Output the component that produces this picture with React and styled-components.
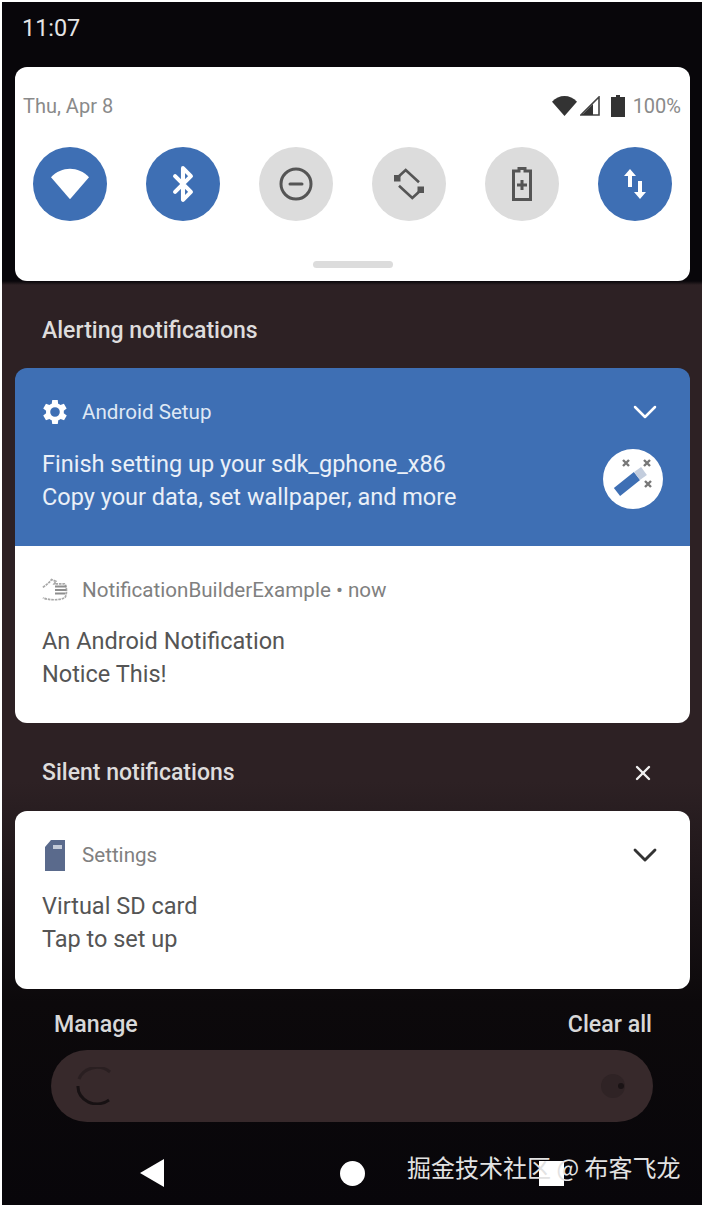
import styled, { createGlobalStyle } from 'styled-components';
import { Bluetooth, ChevronDown, MinusCircle, X } from 'lucide-react';

const GlobalStyle = createGlobalStyle`
  html, body {
    margin: 0;
    padding: 0;
    background: #fff;
  }

  body {
    font-family: Roboto, "Noto Sans", sans-serif;
  }
`;

const Screen = styled.div`
  position: relative;
  box-sizing: border-box;
  width: 700px;
  height: 1203px;
  margin: 2px;
  padding: 0 12px 0 13px;
  overflow: hidden;
  display: flex;
  flex-direction: column;
  background: linear-gradient(
    #08060a 0,
    #08060a 279px,
    #2d2124 283px,
    #2d2124 780px,
    #1a1316 900px,
    #0c090b 1000px,
    #08060a 100%
  );
`;

const StatusBar = styled.div`
  height: 65px;
  padding: 14px 0 0 7px;
  box-sizing: border-box;
  font-size: 23.4px;
  line-height: 25px;
  color: #e4e4e4;
`;

const QuickPanel = styled.div`
  height: 214px;
  box-sizing: border-box;
  padding: 27px 9px 0 8px;
  display: flex;
  flex-direction: column;
  border-radius: 12px;
  background: #fff;
`;

const QuickHeader = styled.div`
  display: flex;
  justify-content: space-between;
  align-items: center;
  height: 24px;
  font-size: 20px;
  color: #8a8a8a;
`;

const StatusIcons = styled.div`
  display: flex;
  align-items: center;
  gap: 3px;

  svg:nth-child(3) {
    margin: 0 2px 0 8px;
  }

  span {
    margin-left: 3px;
    color: #8a8a8a;
  }
`;

const Tiles = styled.div`
  display: flex;
  justify-content: space-between;
  margin: 29px 9px 0 10px;
`;

const Tile = styled.div`
  width: 74px;
  height: 74px;
  display: flex;
  justify-content: center;
  align-items: center;
  border-radius: 50%;
  color: ${(props) => (props.$on ? '#fff' : '#555')};
  background: ${(props) => (props.$on ? '#3e6fb4' : '#dcdcdc')};
`;

const Handle = styled.div`
  width: 80px;
  height: 7px;
  margin: 40px auto 0 290px;
  border-radius: 4px;
  background: #dcdcdc;
`;

const SectionHeader = styled.div`
  display: flex;
  justify-content: space-between;
  align-items: center;
  box-sizing: border-box;
  height: ${(props) => props.$height}px;
  padding: 11px 35px 0 27px;
  font-size: 23px;
  font-weight: 500;
  color: #dedcdc;
`;

const Card = styled.div`
  height: ${(props) => props.$height}px;
  box-sizing: border-box;
  padding: 30px 33px 0 27px;
  color: ${(props) => (props.$blue ? '#eaf0f8' : '#555')};
  background: ${(props) => (props.$blue ? '#3e6fb4' : '#fff')};
  border-radius: ${(props) => props.$radius};
`;

const CardHead = styled.div`
  display: flex;
  align-items: center;
  height: 28px;
  font-size: 20.6px;
  color: ${(props) => (props.$blue ? '#dfe8f4' : '#808080')};
`;

const AppIcon = styled.div`
  width: 26px;
  height: 26px;
  margin-right: 14px;
  display: flex;
  justify-content: center;
  align-items: center;
`;

const AppName = styled.div`
  flex: 1;
`;

const Chevron = styled.div`
  display: flex;
  margin-right: -8px;
  color: ${(props) => (props.$blue ? '#fff' : '#333')};
`;

const CardBody = styled.div`
  display: flex;
  justify-content: space-between;
  align-items: center;
  margin-top: ${(props) => (props.$blue ? 22 : 21)}px;
  font-size: 23.5px;
  line-height: 33px;
`;

const LargeIcon = styled.div`
  width: 60px;
  height: 60px;
  margin: -5px -6px 0 0;
  border-radius: 50%;
  display: flex;
  background: #fff;
`;

const FooterActions = styled.div`
  display: flex;
  justify-content: space-between;
  margin-top: 21px;
  padding: 0 38px 0 39px;
  font-size: 23.2px;
  font-weight: 500;
  line-height: 28px;
  color: #d8d8d8;
`;

const SearchPill = styled.div`
  width: 602px;
  height: 72px;
  margin: 12px 0 0 36px;
  box-sizing: border-box;
  padding: 0 24px;
  display: flex;
  justify-content: space-between;
  align-items: center;
  border-radius: 36px;
  background: #37292b;
`;

const NavBar = styled.div`
  display: flex;
  align-items: center;
  height: 48px;
  margin-top: 27px;
  padding-left: 125px;
`;

const NavBack = styled.div`
  width: 0;
  height: 0;
  border-top: 14px solid transparent;
  border-bottom: 14px solid transparent;
  border-right: 24px solid #fff;
`;

const NavHome = styled.div`
  width: 25px;
  height: 25px;
  margin-left: 176px;
  border-radius: 50%;
  background: #fff;
`;

const NavRecent = styled.div`
  width: 25px;
  height: 25px;
  margin-left: 174px;
  background: #fff;
`;

const Watermark = styled.div`
  position: absolute;
  left: 405px;
  top: 1150px;
  font-family: "Noto Sans CJK SC", sans-serif;
  font-size: 24px;
  line-height: 30px;
  white-space: nowrap;
  color: #e2e2e2;
`;

function WifiIcon({ width, height, color }) {
  return (
    <svg width={width} height={height} viewBox="0 0 40 32">
      <path d="M0 9 C11 -3 29 -3 40 9 L20 32 Z" fill={color} />
    </svg>
  );
}

function SignalIcon() {
  return (
    <svg width="20" height="20" viewBox="0 0 20 20">
      <path d="M19 1 V19 H1 Z" fill="none" stroke="#444" strokeWidth="1.6" />
      <path d="M13 8 V19 H2 Z" fill="#333" />
    </svg>
  );
}

function BatteryIcon() {
  return (
    <svg width="14" height="22" viewBox="0 0 14 22">
      <path d="M5 0 H9 V2 H14 V22 H0 V2 H5 Z" fill="#333" />
    </svg>
  );
}

function RotateIcon() {
  return (
    <svg width="32" height="32" viewBox="-16 -16 32 32" fill="none" stroke="#555" strokeWidth="2.6">
      <path d="M-12.3 -5.7 L-3.3 -14 L10 -1.7" />
      <path d="M12.3 5.7 L3.3 14 L-10 1.7" />
      <rect x="-15" y="-9" width="6.5" height="6.5" fill="#555" stroke="none" />
      <rect x="8.5" y="2.5" width="6.5" height="6.5" fill="#555" stroke="none" />
    </svg>
  );
}

function BatterySaverIcon() {
  return (
    <svg width="20" height="34" viewBox="0 0 20 34" fill="none">
      <path d="M7 4 V1.5 H13 V4 H18.5 V32.5 H1.5 V4 Z" stroke="#555" strokeWidth="3" />
      <path d="M10 13 V23 M5 18 H15" stroke="#555" strokeWidth="3" />
    </svg>
  );
}

function DataIcon() {
  return (
    <svg width="22" height="30" viewBox="0 0 22 30" fill="#fff">
      <path d="M6 0 L12 7 H8 V18 H4 V7 H0 Z" />
      <path d="M16 30 L10 23 H14 V12 H18 V23 H22 Z" />
    </svg>
  );
}

function GearIcon() {
  return (
    <svg width="26" height="26" viewBox="3.4 2.5 17.2 19" fill="#fff">
      <path d="M18.4 13a7.6 7.6 0 0 0 0-2l2.1-1.6-2-3.5-2.5 1a7.5 7.5 0 0 0-1.7-1L14 3.2h-4l-.4 2.7a7.5 7.5 0 0 0-1.7 1l-2.5-1-2 3.5L5.5 11a7.6 7.6 0 0 0 0 2l-2.1 1.6 2 3.5 2.5-1a7.5 7.5 0 0 0 1.7 1l.4 2.7h4l.4-2.7a7.5 7.5 0 0 0 1.700-1l2.500 1 2-3.500zM12 15.500a3.500 3.500 0 1 1 0-7 3.500 3.500 0 0 1 0 7z" />
    </svg>
  );
}

function WandIcon() {
  return (
    <svg width="60" height="60" viewBox="0 0 60 60">
      <path d="M14 43 L34 27" stroke="#3e6fb4" strokeWidth="10" />
      <path d="M34 27 L41 22" stroke="#c3cddd" strokeWidth="10" />
      <path d="M20 11 L26 17 M26 11 L20 17 M41 11 L47 17 M47 11 L41 17 M42 32 L48 38 M48 32 L42 38" stroke="#777" strokeWidth="2.4" />
    </svg>
  );
}

function HandIcon() {
  return (
    <svg width="30" height="26" viewBox="0 0 30 26" fill="none" stroke="#a8a8a8" strokeWidth="2">
      <path d="M1 10 C5 7 8 5 11 1 L16 3 L14 6 H26 C29 8 29 20 26 22 C20 25 8 25 1 22" strokeDasharray="3 1" />
      <path d="M15 9 H28 M15 13 H28 M15 17 H27" stroke="#8e8e8e" strokeWidth="2.4" />
    </svg>
  );
}

function SdCardIcon() {
  return (
    <svg width="20" height="31" viewBox="0 0 20 31">
      <path d="M6 0 H20 V31 H0 V7 Z" fill="#5a6a8c" />
      <path d="M8 5 H17 V9 H8 Z" fill="#c4cbd8" />
    </svg>
  );
}

function GoogleMark() {
  return (
    <svg width="41" height="38" viewBox="0 0 41 38" fill="none" stroke="#171113" strokeWidth="3">
      <path d="M35 5 A19 17 0 0 0 4 12" opacity="0.4" />
      <path d="M3 19 A19 17 0 0 0 34 33" />
    </svg>
  );
}

function MicMark() {
  return (
    <svg width="30" height="36" viewBox="0 0 30 36" fill="#2f2325">
      <circle cx="14" cy="18" r="12" />
      <circle cx="22" cy="18" r="3" fill="#1a1315" />
    </svg>
  );
}

export default function App() {
  return (
    <>
      <GlobalStyle />
      <Screen>
        <StatusBar>11:07</StatusBar>
        <QuickPanel>
          <QuickHeader>
            Thu, Apr 8
            <StatusIcons>
              <WifiIcon width={25} height={20} color="#333" />
              <SignalIcon />
              <BatteryIcon />
              <span>100%</span>
            </StatusIcons>
          </QuickHeader>
          <Tiles>
            <Tile $on><WifiIcon width={38} height={32} color="#fff" /></Tile>
            <Tile $on><Bluetooth size={38} strokeWidth={2.6} /></Tile>
            <Tile><MinusCircle size={36} strokeWidth={2} /></Tile>
            <Tile><RotateIcon /></Tile>
            <Tile><BatterySaverIcon /></Tile>
            <Tile $on><DataIcon /></Tile>
          </Tiles>
          <Handle />
        </QuickPanel>
        <SectionHeader $height={87}>Alerting notifications</SectionHeader>
        <Card $blue $height={178} $radius="12px 12px 0 0">
          <CardHead $blue>
            <AppIcon><GearIcon /></AppIcon>
            <AppName>Android Setup</AppName>
            <Chevron $blue><ChevronDown size={40} strokeWidth={1.5} /></Chevron>
          </CardHead>
          <CardBody $blue>
            <div>
              Finish setting up your sdk_gphone_x86
              <br />
              Copy your data, set wallpaper, and more
            </div>
            <LargeIcon><WandIcon /></LargeIcon>
          </CardBody>
        </Card>
        <Card $height={177} $radius="0 0 12px 12px">
          <CardHead>
            <AppIcon><HandIcon /></AppIcon>
            <AppName>NotificationBuilderExample • now</AppName>
          </CardHead>
          <CardBody>
            <div>
              An Android Notification
              <br />
              Notice This!
            </div>
          </CardBody>
        </Card>
        <SectionHeader $height={88}>
          Silent notifications
          <X size={24} strokeWidth={2.4} color="#f0f0f0" />
        </SectionHeader>
        <Card $height={178} $radius="12px">
          <CardHead>
            <AppIcon><SdCardIcon /></AppIcon>
            <AppName>Settings</AppName>
            <Chevron><ChevronDown size={40} strokeWidth={1.7} /></Chevron>
          </CardHead>
          <CardBody>
            <div>
              Virtual SD card
              <br />
              Tap to set up
            </div>
          </CardBody>
        </Card>
        <FooterActions>
          <div>Manage</div>
          <div>Clear all</div>
        </FooterActions>
        <SearchPill>
          <GoogleMark />
          <MicMark />
        </SearchPill>
        <NavBar>
          <NavBack />
          <NavHome />
          <NavRecent />
        </NavBar>
        <Watermark>掘金技术社区 @ 布客飞龙</Watermark>
      </Screen>
    </>
  );
}
